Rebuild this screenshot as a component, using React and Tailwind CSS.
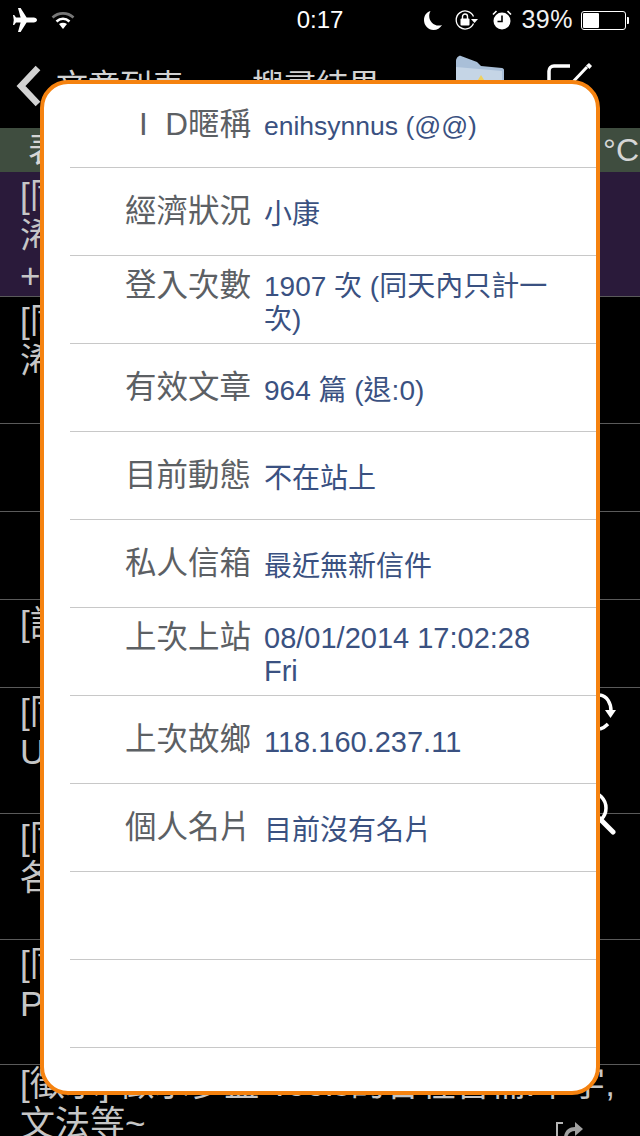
const SANS = 'font-["Liberation_Sans","Noto_Sans_CJK_TC",sans-serif]';

// shift: single-line values sit a little lower than the label baseline in the original
const PROFILE = [
  { label: 'I\u00a0\u00a0D暱稱', value: 'enihsynnus (@@)', size: 'text-[26.5px]', up: true },
  { label: '經濟狀況', value: '小康', size: 'text-[28px]', shift: 'translate-y-[2px]' },
  { label: '登入次數', value: '1907 次 (同天內只計一次)', size: 'text-[28px]', up: true },
  { label: '有效文章', value: '964 篇 (退:0)', size: 'text-[28px]', shift: 'translate-y-[2px]' },
  { label: '目前動態', value: '不在站上', size: 'text-[28px]', shift: 'translate-y-[2px]' },
  { label: '私人信箱', value: '最近無新信件', size: 'text-[28px]', shift: 'translate-y-[2px]' },
  { label: '上次上站', value: '08/01/2014 17:02:28 Fri', size: 'text-[29px]', up: true },
  { label: '上次故鄉', value: '118.160.237.11', size: 'text-[29px]', shift: 'translate-y-[2px]' },
  { label: '個人名片', value: '目前沒有名片', size: 'text-[28px]', shift: 'translate-y-[2px]' },
  { label: '', value: '', size: '' },
  { label: '', value: '', size: '' },
];

const LIST_ROWS = [
  { lines: ['[同題] 多益成績', '浠', '+'], height: 'h-[125px]', bg: 'bg-[#2a1a3a]' },
  { lines: ['[同題] 多益成績', '浠'], height: 'h-[127px]' },
  { lines: [], height: 'h-[88px]' },
  { lines: [], height: 'h-[88px]' },
  { lines: ['[討論] 多益'], height: 'h-[88px]' },
  { lines: ['[同題] 多益', 'U'], height: 'h-[126px]' },
  { lines: ['[同題] 多益', '各'], height: 'h-[126px]' },
  { lines: ['[同題] 多益', 'P'], height: 'h-[125px]' },
];

function Plane() {
  return (
    <svg width="24" height="24" viewBox="0 0 24 24" className="fill-white">
      <path d="M5 0h2.6l6 9.6h7.2c1.6 0 3.2 1.1 3.2 2.4s-1.6 2.4-3.2 2.4h-7.2l-6 9.6H5l2.6-9.6H3L1.2 17H0l.8-5L0 7h1.2L3 9.6h4.6z" />
    </svg>
  );
}

function Wifi() {
  return (
    <svg width="24" height="18" viewBox="0 0 24 18" fill="none">
      <path d="M1.5 6.5C7.5 1 16.500 1 22.500 6.500" stroke="#777" strokeWidth="2.600" />
      <path d="M5.500 10.500C9.500 7 14.500 7 18.500 10.500" stroke="#fff" strokeWidth="2.600" />
      <path d="M12 18l-4-5c2.500-1.800 5.500-1.800 8 0z" fill="#fff" />
    </svg>
  );
}

function StatusIcons() {
  return (
    <>
      <svg width="18" height="19" viewBox="0 0 18 19" className="fill-white">
        <path d="M6.500 0C2.500 1.200 0 4.800 0 9c0 5.500 4.300 10 9.500 10 3.500 0 6.800-2 8.500-5-1 .4-2.200.6-3.400.6C9.500 14.600 5.200 10.300 5.200 5c0-1.800.4-3.500 1.300-5z" />
      </svg>
      <svg width="24" height="20" viewBox="0 0 24 20" fill="none" className="ml-[13px]">
        <path d="M18.500 13.500A9 9 0 1 1 18.500 6.500" stroke="#fff" strokeWidth="1.300" />
        <path d="M16 9h7l-3.500 4z" fill="#fff" />
        <rect x="5.500" y="8.500" width="9" height="7" rx="1" fill="#fff" />
        <path d="M7.500 9V6.500a2.500 2.500 0 0 1 5 0V9" stroke="#fff" strokeWidth="1.400" />
      </svg>
      <svg width="20" height="20" viewBox="0 0 20 20" fill="none" className="ml-[13px]">
        <circle cx="10" cy="11" r="8.500" fill="#fff" />
        <path d="M10 5.500V11.500H5.500" stroke="#000" strokeWidth="1.600" />
        <path d="M1 4.500L4.500 1M19 4.500L15.500 1" stroke="#fff" strokeWidth="1.600" />
      </svg>
    </>
  );
}

function Battery() {
  return (
    <div className="flex items-center ml-[8px]">
      <div className="w-[45px] h-[19px] rounded-[3px] border border-white p-[1px]">
        <div className="w-[16px] h-full bg-white rounded-[1px]" />
      </div>
      <div className="w-[2px] h-[7px] ml-[1px] bg-white rounded-r-[1px]" />
    </div>
  );
}

function StatusBar() {
  return (
    <div className="h-10 relative flex items-center pl-[13px] pr-[11px] text-white">
      <Plane />
      <div className="ml-[14px]">
        <Wifi />
      </div>
      <div className="absolute left-0 right-0 text-center text-[24px] font-medium">0:17</div>
      <div className="ml-auto flex items-center">
        <StatusIcons />
        <span className="ml-[9px] text-[25px] tracking-[0.5px] text-[#f2f2f2]">39%</span>
        <Battery />
      </div>
    </div>
  );
}

function NavBar() {
  return (
    <div className="h-[88px] flex items-start text-[32px] leading-[44px] text-[#d2d2d2]">
      <svg width="30" height="44" viewBox="0 0 30 44" fill="none" className="ml-[14px] mt-[24px]">
        <path d="M24 4L7 22l17 18" stroke="#d2d2d2" strokeWidth="6.500" />
      </svg>
      <span className="ml-[12px] mt-[24px]">文章列表</span>
      <span className="ml-[68px] mt-[24px]">搜尋結果</span>
      <svg width="48" height="44" viewBox="0 0 48 44" className="ml-[76px] mt-[15px]">
        <path d="M5 1l16 6 4 4 21 2c1 0 2 1 2 2v29H0V6c0-3 3-6 5-5z" fill="#a9bfd8" />
        <path d="M0 12l46 4v28H0z" fill="#c5d5e6" />
        <path d="M20 28l5-8 5 8z" fill="#f0d05e" />
      </svg>
      <svg width="46" height="30" viewBox="0 0 46 30" fill="none" className="ml-[43px] mt-[23px]">
        <path d="M23 3H7a5 5 0 0 0-5 5v22" stroke="#fff" strokeWidth="3.500" />
        <path d="M23 22L40 4" stroke="#fff" strokeWidth="3" />
        <path d="M39 2.500L42 0l3 3-2.500 3z" fill="#fff" />
      </svg>
    </div>
  );
}

function Background() {
  return (
    <div className="text-[35px] leading-[40px] text-[#c6c6c6]">
      <div className="h-[44px] bg-[#3f4d3f] flex items-center justify-between pl-[28px] pr-[1px] text-[#d6d6d6]">
        <span>表</span>
        <span className="text-[32px]">°C</span>
      </div>
      {LIST_ROWS.map((row, i) => (
        <div key={i} className={`${row.height} ${row.bg ?? ''} pl-[20px] pt-[4px] border-b border-[#5a5a5a] whitespace-nowrap`}>
          {row.lines.map((line, j) => (
            <div key={j}>{line}</div>
          ))}
        </div>
      ))}
      <div className="pl-[20px] -mt-[1px] whitespace-nowrap">
        <div>[徵求] 徵求多益 Tools的各種習補:單字,</div>
        <div>文法等~</div>
      </div>
    </div>
  );
}

function ProfileCard() {
  return (
    <div className="absolute left-[40px] top-[80px] w-[560px] h-[1015px] bg-white border-4 border-[#f5820f] rounded-[28px] overflow-hidden">
      {PROFILE.map((item, i) => (
        <div
          key={i}
          className={`${i === 0 ? 'h-[84px]' : 'h-[88px]'} ml-[26px] flex items-center border-b border-[#c8c8c8]`}
        >
          <div className={`flex items-baseline -ml-[26px] ${item.up ? '-translate-y-[1px]' : ''}`}>
            <div className="w-[207px] text-right text-[31.5px] text-[#5c6064] whitespace-nowrap">{item.label}</div>
            <div className={`w-[302px] ml-[13px] leading-[33px] text-[#3a5181] ${item.size} ${item.shift ?? ''}`}>{item.value}</div>
          </div>
        </div>
      ))}
    </div>
  );
}

export default function App() {
  return (
    <div className={`relative w-[640px] h-[1136px] overflow-hidden bg-black ${SANS}`}>
      <StatusBar />
      <NavBar />
      <Background />

      {/* row buttons peeking out from behind the card */}
      <svg width="40" height="44" viewBox="0 0 40 44" fill="none" className="absolute left-[580px] top-[692px]">
        <path d="M20 3c7 1 11 8 11 16" stroke="#fff" strokeWidth="3.500" />
        <path d="M25 18h11l-5.500 8z" fill="#fff" />
        <path d="M28 32c-2 2-4 4-8 5" stroke="#fff" strokeWidth="3.500" />
      </svg>
      <svg width="44" height="60" viewBox="0 0 44 60" fill="none" className="absolute left-[572px] top-[780px]">
        <circle cx="18" cy="28" r="16" stroke="#fff" strokeWidth="3.500" />
        <path d="M28 39l13 13" stroke="#fff" strokeWidth="5" strokeLinecap="round" />
      </svg>
      <svg width="30" height="20" viewBox="0 0 30 20" fill="none" className="absolute left-[555px] top-[1118px]">
        <path d="M8 5H2v15" stroke="#b5b5b5" strokeWidth="2" />
        <path d="M9 20c0-7 5-11 11-11V4l8 7-8 7v-5c-4 0-7 2-8 7z" fill="#a0a0a0" />
      </svg>

      <ProfileCard />
    </div>
  );
}
